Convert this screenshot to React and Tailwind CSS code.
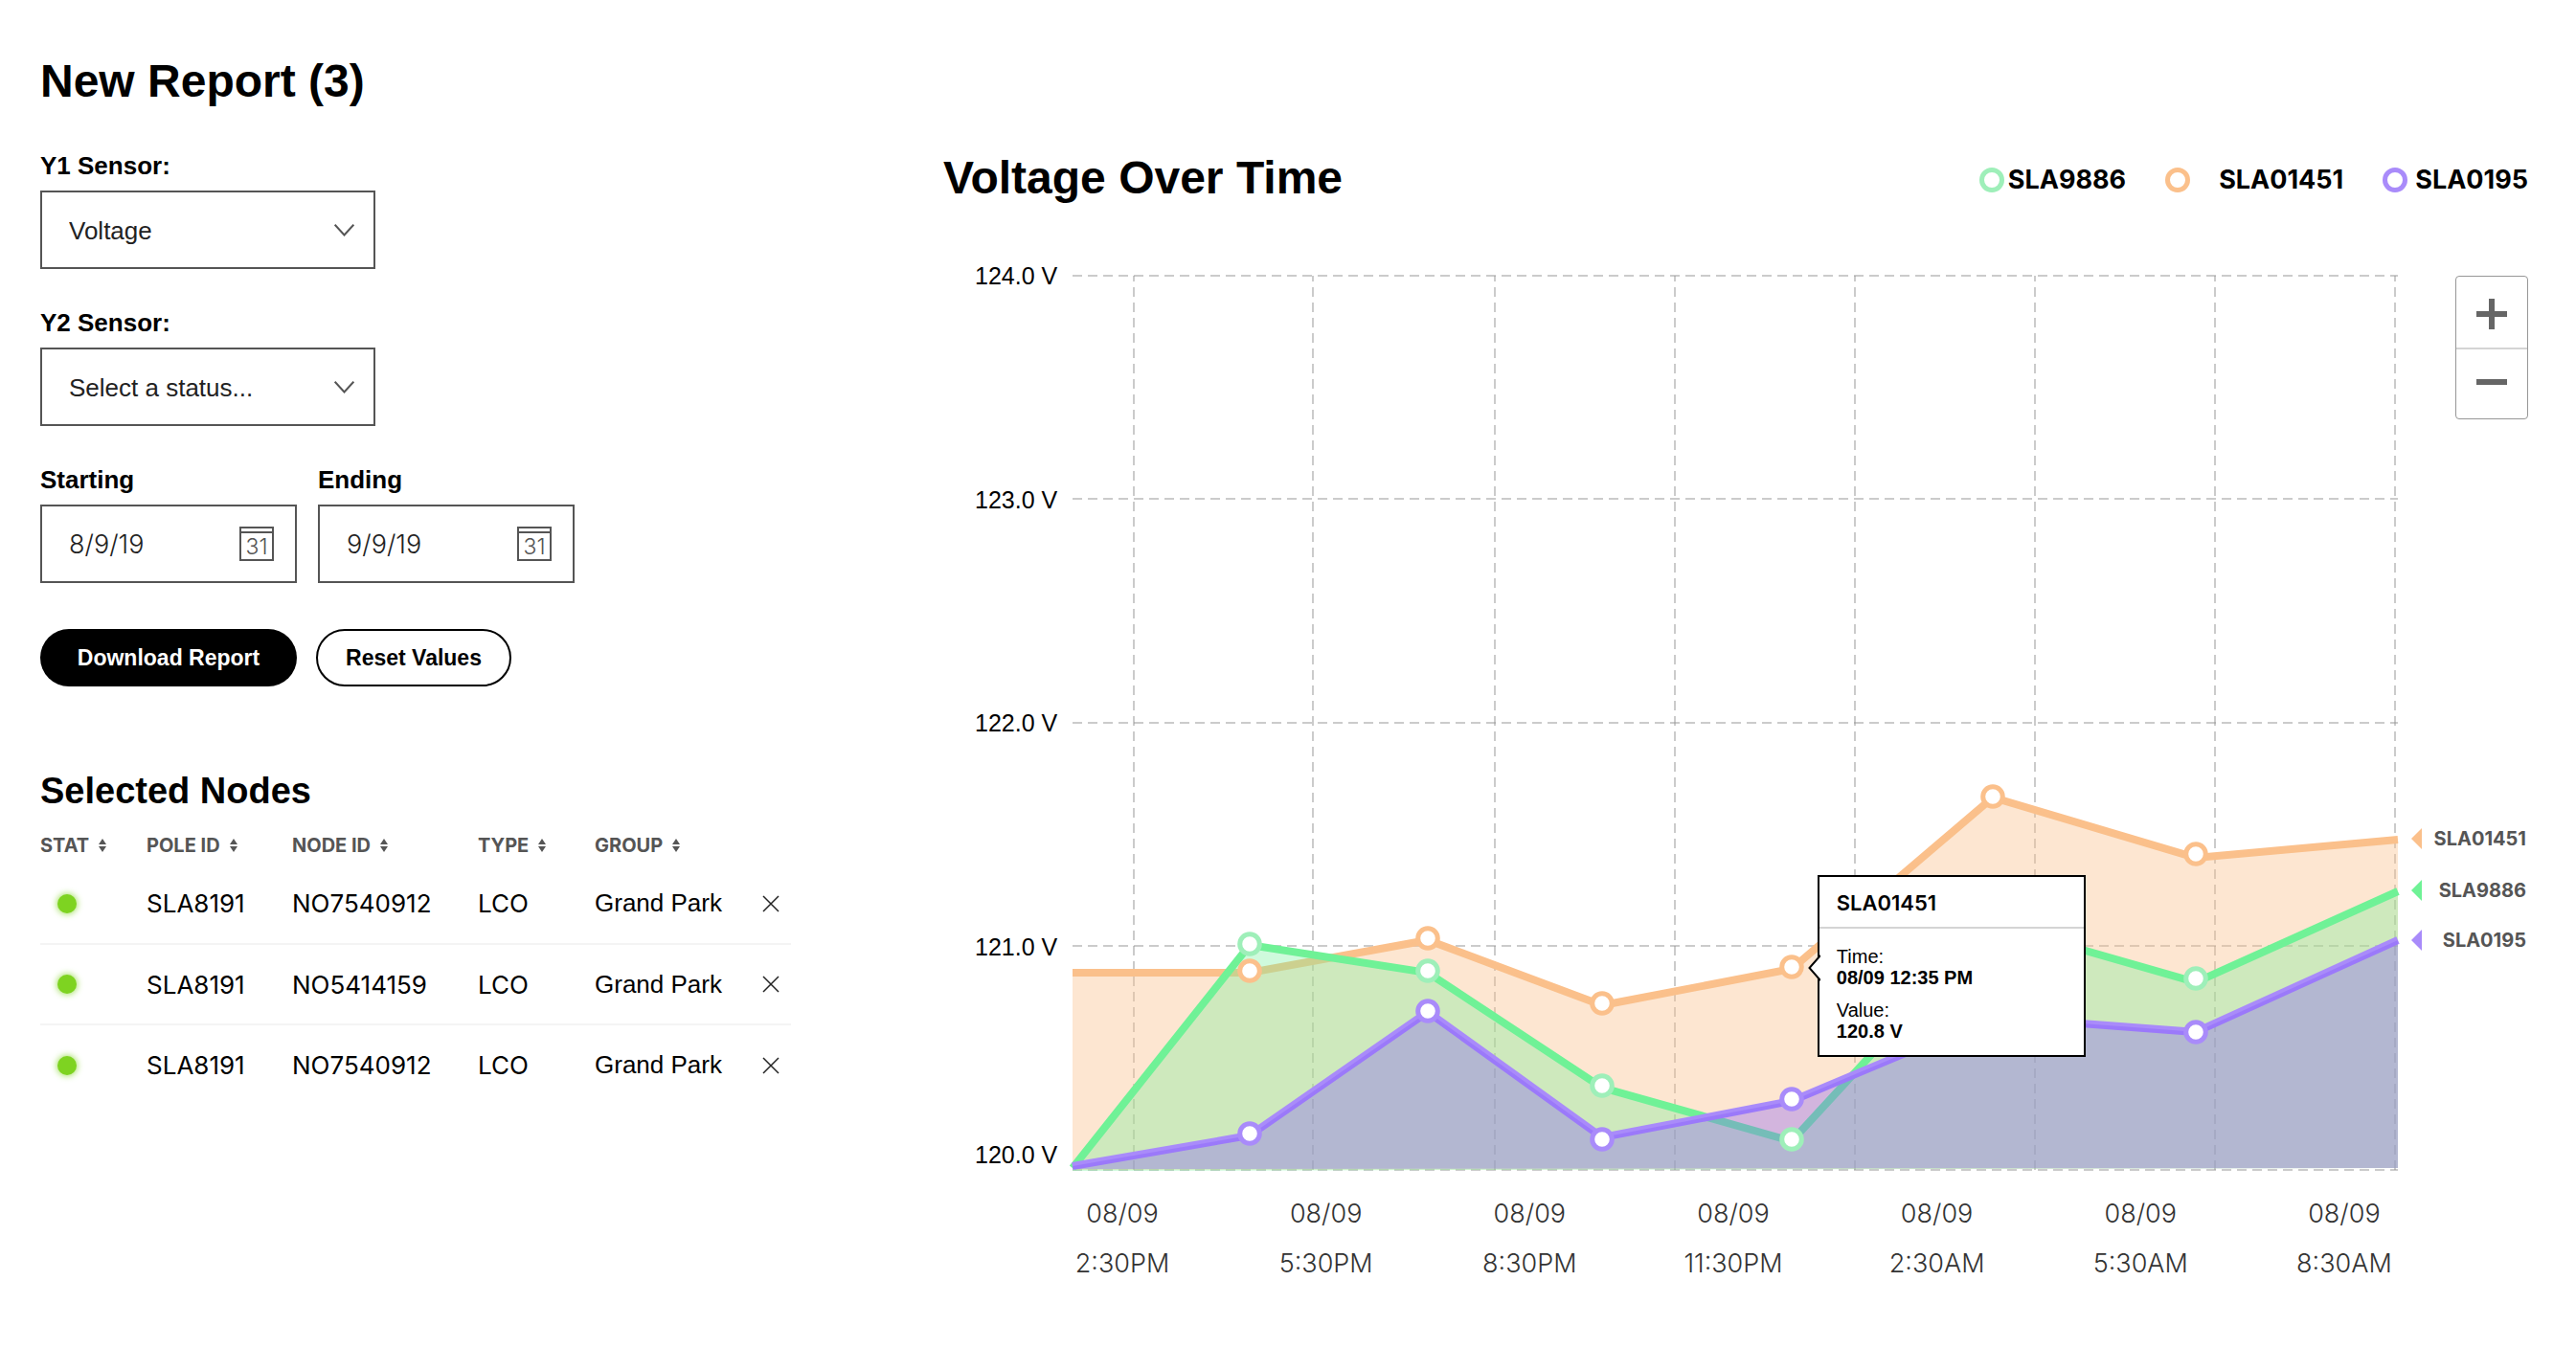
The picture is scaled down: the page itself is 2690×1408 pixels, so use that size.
import React, { useState } from 'react';

// Plot area of the chart, in viewBox units
const PLOT_WIDTH = 1384;
const PLOT_HEIGHT = 934;

const series = [
  {
    name: 'SLA01451',
    line: '#fbc08b',
    marker: '#fbc08b',
    fill: '#fbc08b',
    fillOpacity: 0.4,
    points: [[0, 728], [185, 728], [371, 694], [553, 762], [751, 724], [961, 545], [1173, 608], [1384, 589]],
    markers: [[185, 726], [371, 692], [553, 760], [751, 722], [961, 544], [1173, 604]],
    base: [934, 932],
    labelY: 588,
  },
  {
    name: 'SLA9886',
    line: '#6ff296',
    marker: '#9eefb9',
    fill: '#73f199',
    fillOpacity: 0.34,
    points: [[0, 932], [185, 699], [371, 728], [553, 848], [751, 904], [960, 677], [1173, 738], [1384, 643]],
    markers: [[185, 698], [371, 726], [553, 846], [751, 902], [1173, 734]],
    base: [935, 932],
    labelY: 642,
  },
  {
    name: 'SLA0195',
    line: '#a98bfa',
    marker: '#a98bfa',
    fill: '#8159fa',
    fillOpacity: 0.34,
    points: [[0, 930], [185, 898], [371, 769], [553, 900], [751, 862], [960, 774], [1173, 790], [1384, 694]],
    markers: [[185, 896], [371, 768], [553, 902], [751, 860], [1173, 790]],
    base: [933, 932],
    labelY: 694,
  },
];

const legend = [
  { name: 'SLA9886', ring: 'border-[#9eefb9]', gap: 'gap-1' },
  { name: 'SLA01451', ring: 'border-[#fbc08b]', gap: 'gap-[30px]' },
  { name: 'SLA0195', ring: 'border-[#a98bfa]', gap: 'gap-2' },
];

const gridX = [64, 251, 441, 629, 817, 1005, 1193, 1381];
const gridY = [0, 233, 467, 700, 934];

const xTicks = ['2:30PM', '5:30PM', '8:30PM', '11:30PM', '2:30AM', '5:30AM', '8:30AM'];

const columns = ['STAT', 'POLE ID', 'NODE ID', 'TYPE', 'GROUP'];

const initialNodes = [
  { id: 1, pole: 'SLA8191', node: 'NO7540912', type: 'LCO', group: 'Grand Park' },
  { id: 2, pole: 'SLA8191', node: 'NO5414159', type: 'LCO', group: 'Grand Park' },
  { id: 3, pole: 'SLA8191', node: 'NO7540912', type: 'LCO', group: 'Grand Park' },
];

const toPath = (points) => points.map(([x, y]) => `${x},${y}`).join(' ');

const SelectField = ({ id, label, value, onChange, options }) => (
  <div className="mb-10">
    <label htmlFor={id} className="block mb-2.5 text-[26px] leading-8 font-bold">
      {label}
    </label>
    <div className="relative w-[350px]">
      <select
        id={id}
        value={value}
        onChange={(e) => onChange(e.target.value)}
        className="block w-full h-[82px] pl-7 pr-14 pt-0.5 appearance-none bg-white border-2 border-[#555] text-[26px] text-[#222]"
      >
        {options.map((option) => (
          <option key={option}>{option}</option>
        ))}
      </select>
      <svg
        className="absolute right-[22px] top-[35px] pointer-events-none"
        width="21"
        height="13"
        viewBox="0 0 21 13"
        fill="none"
        stroke="#555"
        strokeWidth="2"
      >
        <path d="M.7 .7L10.5 11.5L20.3 .7" />
      </svg>
    </div>
  </div>
);

const DateField = ({ id, label, value, onChange }) => (
  <div>
    <label htmlFor={id} className="block mb-2.5 text-[26px] leading-8 font-bold">
      {label}
    </label>
    <div className="flex items-center w-[268px] h-[82px] pl-7 pr-[22px] border-2 border-[#555]">
      <input
        id={id}
        type="text"
        value={value}
        onChange={(e) => onChange(e.target.value)}
        className="min-w-0 flex-1 pt-0.5 text-[27px] text-[#222] font-['Inter',sans-serif] font-light outline-none"
      />
      <button type="button" aria-label={`Pick ${label.toLowerCase()} date`}>
        <svg width="36" height="36" viewBox="0 0 36 36" fill="none" stroke="#555" strokeWidth="2">
          <rect x="1" y="1" width="34" height="34" />
          <path d="M1 6h34" />
          <text
            x="18"
            y="29"
            textAnchor="middle"
            fill="#555"
            stroke="none"
            fontSize="23"
            fontWeight="300"
            fontFamily="Inter, sans-serif"
          >
            31
          </text>
        </svg>
      </button>
    </div>
  </div>
);

const SortIcon = () => (
  <svg width="8" height="14" viewBox="0 0 8 14" fill="#555">
    <path d="M4 0l4 6H0zM4 14l4-6H0z" />
  </svg>
);

const NodesTable = () => {
  const [nodes, setNodes] = useState(initialNodes);

  return (
    <table className="w-full mt-3 table-fixed text-left">
      <colgroup>
        <col className="w-[111px]" />
        <col className="w-[152px]" />
        <col className="w-[194px]" />
        <col className="w-[122px]" />
        <col />
        <col className="w-[30px]" />
      </colgroup>
      <thead>
        <tr className="h-10">
          {columns.map((column) => (
            <th key={column} className="p-0">
              <button
                type="button"
                className="flex items-center gap-2.5 pt-0.5 text-[20px] leading-6 font-bold text-[#555] font-['Inter',sans-serif]"
              >
                {column}
                <SortIcon />
              </button>
            </th>
          ))}
          <th className="p-0" aria-label="Remove" />
        </tr>
      </thead>
      <tbody className="text-[26px] font-['Inter',sans-serif]">
        {nodes.map((node) => (
          <tr key={node.id} className="h-[84px] border-b-2 border-[#f4f4f4] last:border-b-0">
            <td className="p-0">
              <div className="ml-[18px] size-5 rounded-full bg-[#7ed321] shadow-[0_0_6px_1px_#7ed321aa]" />
            </td>
            <td className="p-0">{node.pole}</td>
            <td className="p-0">{node.node}</td>
            <td className="p-0">{node.type}</td>
            <td className="p-0 font-['Liberation_Sans',Arial,sans-serif]">{node.group}</td>
            <td className="p-0">
              <button
                type="button"
                aria-label="Remove node"
                className="block"
                onClick={() => setNodes(nodes.filter((n) => n.id !== node.id))}
              >
                <svg width="18" height="18" viewBox="0 0 18 18" stroke="#222" strokeWidth="1.5">
                  <path d="M1 1l16 16M17 1L1 17" />
                </svg>
              </button>
            </td>
          </tr>
        ))}
      </tbody>
    </table>
  );
};

const Tooltip = () => (
  <div className="absolute left-[56.2%] top-[67%] w-[280px] h-[190px] bg-white border-2 border-black">
    <svg className="absolute -left-3 top-[81px]" width="13" height="28" viewBox="0 0 13 28">
      <path d="M13 1L1.5 14L13 27" fill="#fff" stroke="#000" strokeWidth="2" />
    </svg>
    <div className="flex items-center h-[54px] px-[18px] pt-1 border-b-2 border-[#d4d4d4] text-[22px] font-semibold font-['Inter',sans-serif]">
      SLA01451
    </div>
    <dl className="px-[18px] pt-[18px] text-[20px] leading-[22px]">
      <dt>Time:</dt>
      <dd className="mb-3 font-bold">08/09 12:35 PM</dd>
      <dt>Value:</dt>
      <dd className="font-bold">120.8 V</dd>
    </dl>
  </div>
);

const Chart = () => (
  <div className="grid grid-cols-[135px_1fr_136px]">
    {/* Y axis */}
    <div className="grid grid-rows-4 pl-[33px] text-[25px] leading-8">
      <div className="-mt-4">124.0 V</div>
      <div className="-mt-4">123.0 V</div>
      <div className="-mt-4">122.0 V</div>
      <div className="-mt-4 flex flex-col justify-between">
        <span>121.0 V</span>
        <span>120.0 V</span>
      </div>
    </div>

    <div className="relative">
      <svg viewBox={`0 0 ${PLOT_WIDTH} ${PLOT_HEIGHT}`} className="block w-full h-auto overflow-visible">
        <g stroke="#979797" strokeOpacity="0.5" strokeWidth="2" strokeDasharray="10 6">
          {gridY.map((y) => (
            <path key={y} d={`M0 ${y}H${PLOT_WIDTH}`} />
          ))}
          {gridX.map((x) => (
            <path key={x} d={`M${x} 0V${PLOT_HEIGHT}`} strokeDashoffset="4" />
          ))}
        </g>
        {series.map((s) => (
          <g key={s.name}>
            <polyline points={toPath(s.points)} fill="none" stroke={s.line} strokeWidth="8" />
            <polygon
              points={`${toPath(s.points)} ${PLOT_WIDTH},${s.base[1]} 0,${s.base[0]}`}
              fill={s.fill}
              fillOpacity={s.fillOpacity}
            />
          </g>
        ))}
        {series.map((s) =>
          s.markers.map(([x, y]) => (
            <circle key={`${s.name}-${x}`} cx={x} cy={y} r="10.3" fill="#fff" stroke={s.marker} strokeWidth="5" />
          ))
        )}
      </svg>
      <Tooltip />
    </div>

    {/* Zoom buttons and last value labels */}
    <div className="relative">
      <div className="ml-auto w-[76px] rounded-sm border border-[#979797]">
        <button type="button" aria-label="Zoom in" className="flex items-center justify-center w-full h-[74px] pt-1">
          <svg width="32" height="32" viewBox="0 0 32 32" fill="#666">
            <path d="M13 0h6v13h13v6H19v13h-6V19H0v-6h13z" />
          </svg>
        </button>
        <button
          type="button"
          aria-label="Zoom out"
          className="flex items-center justify-center w-full h-[74px] pb-1 border-t-2 border-[#d4d4d4]"
        >
          <svg width="32" height="6" viewBox="0 0 32 6" fill="#666">
            <path d="M0 0h32v6H0z" />
          </svg>
        </button>
      </div>
      {series.map((s) => (
        <div
          key={s.name}
          className="absolute left-3.5 right-0.5 -translate-y-1/2 flex items-center justify-between text-[20px] leading-6 font-bold text-[#555] font-['Inter',sans-serif]"
          style={{ top: `${(s.labelY / PLOT_HEIGHT) * 100}%` }}
        >
          <svg width="11" height="22" viewBox="0 0 11 22" fill={s.line}>
            <path d="M11 0v22L0 11z" />
          </svg>
          {s.name}
        </div>
      ))}
    </div>

    {/* X axis */}
    <div className="col-start-2 flex justify-between mt-5 pr-1 text-[27px] leading-[52px] text-[#333] text-center font-light font-['Inter',sans-serif]">
      {xTicks.map((tick) => (
        <div key={tick} className="w-[104px]">
          <div>08/09</div>
          <div>{tick}</div>
        </div>
      ))}
    </div>
  </div>
);

const App = () => {
  const [y1, setY1] = useState('Voltage');
  const [y2, setY2] = useState('Select a status...');
  const [starting, setStarting] = useState('8/9/19');
  const [ending, setEnding] = useState('9/9/19');

  const handleReset = () => {
    setY1('Voltage');
    setY2('Select a status...');
    setStarting('8/9/19');
    setEnding('9/9/19');
  };

  return (
    <main className="flex flex-col xl:flex-row gap-[159px] min-h-screen bg-white pl-[42px] pr-[50px] text-black font-['Liberation_Sans',Arial,sans-serif]">
      <aside className="w-[784px] max-w-full shrink-0 pt-[57px]">
        <h1 className="mb-11 text-5xl leading-[56px] font-bold">New Report (3)</h1>

        <form onSubmit={(e) => e.preventDefault()}>
          <SelectField
            id="y1-sensor"
            label="Y1 Sensor:"
            value={y1}
            onChange={setY1}
            options={['Voltage', 'Current', 'Power']}
          />
          <SelectField
            id="y2-sensor"
            label="Y2 Sensor:"
            value={y2}
            onChange={setY2}
            options={['Select a status...', 'Voltage', 'Current', 'Power']}
          />
          <div className="flex gap-[22px]">
            <DateField id="starting" label="Starting" value={starting} onChange={setStarting} />
            <DateField id="ending" label="Ending" value={ending} onChange={setEnding} />
          </div>
          <div className="flex gap-5 mt-12 text-[23px] font-bold">
            <button type="submit" className="w-[268px] h-[60px] rounded-full bg-black text-white">
              Download Report
            </button>
            <button
              type="button"
              onClick={handleReset}
              className="w-[204px] h-[60px] rounded-full border-2 border-black"
            >
              Reset Values
            </button>
          </div>
        </form>

        <h2 className="mt-[85px] text-[38px] leading-[48px] font-bold">Selected Nodes</h2>
        <NodesTable />
      </aside>

      <section className="min-w-0 flex-1 pt-[158px]">
        <div className="flex items-center justify-between mb-[74px]">
          <h2 className="text-5xl leading-[56px] font-bold">Voltage Over Time</h2>
          <ul className="flex gap-[41px] pt-1 text-[27px] leading-8 font-bold font-['Inter',sans-serif]">
            {legend.map((item) => (
              <li key={item.name} className={`flex items-center ${item.gap}`}>
                <span className={`size-[26px] rounded-full border-[5px] ${item.ring}`} />
                {item.name}
              </li>
            ))}
          </ul>
        </div>
        <Chart />
      </section>
    </main>
  );
};

export default App;
